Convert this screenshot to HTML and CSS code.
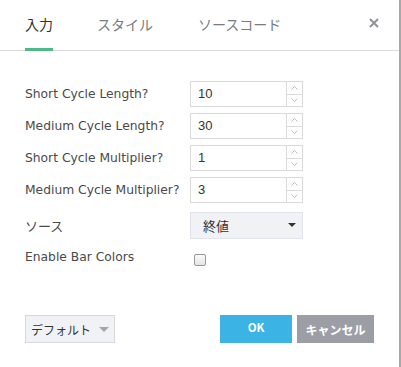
FILE: index.html
```html
<!DOCTYPE html>
<html>
<head>
<meta charset="UTF-8">
<title>入力</title>
<link rel="stylesheet" href="styles.css">
</head>
<body>
<div class="dialog">
    <div class="tabs">
        <span class="tab active">入力</span>
        <span class="tab">スタイル</span>
        <span class="tab">ソースコード</span>
        <svg class="close" width="10" height="10" viewBox="0 0 10 10"><path d="M1 1L9 9M9 1L1 9" stroke="#8f9196" stroke-width="2"/></svg>
    </div>

    <div class="content">
        <div class="row">
            <label>Short Cycle Length?</label>
            <div class="spin"><span class="val">10</span><span class="arrows"><i><svg width="7" height="4" viewBox="0 0 7 4"><path d="M0.5 3.5L3.5 0.5L6.5 3.5" fill="none" stroke="#b8c2cc"/></svg></i><i><svg width="7" height="4" viewBox="0 0 7 4"><path d="M0.5 0.5L3.5 3.5L6.5 0.5" fill="none" stroke="#b8c2cc"/></svg></i></span></div>
        </div>
        <div class="row">
            <label>Medium Cycle Length?</label>
            <div class="spin"><span class="val">30</span><span class="arrows"><i><svg width="7" height="4" viewBox="0 0 7 4"><path d="M0.5 3.5L3.5 0.5L6.5 3.5" fill="none" stroke="#b8c2cc"/></svg></i><i><svg width="7" height="4" viewBox="0 0 7 4"><path d="M0.5 0.5L3.5 3.5L6.5 0.5" fill="none" stroke="#b8c2cc"/></svg></i></span></div>
        </div>
        <div class="row">
            <label>Short Cycle Multiplier?</label>
            <div class="spin"><span class="val">1</span><span class="arrows"><i><svg width="7" height="4" viewBox="0 0 7 4"><path d="M0.5 3.5L3.5 0.5L6.5 3.5" fill="none" stroke="#b8c2cc"/></svg></i><i><svg width="7" height="4" viewBox="0 0 7 4"><path d="M0.5 0.5L3.5 3.5L6.5 0.5" fill="none" stroke="#b8c2cc"/></svg></i></span></div>
        </div>
        <div class="row">
            <label>Medium Cycle Multiplier?</label>
            <div class="spin"><span class="val">3</span><span class="arrows"><i><svg width="7" height="4" viewBox="0 0 7 4"><path d="M0.5 3.5L3.5 0.5L6.5 3.5" fill="none" stroke="#b8c2cc"/></svg></i><i><svg width="7" height="4" viewBox="0 0 7 4"><path d="M0.5 0.5L3.5 3.5L6.5 0.5" fill="none" stroke="#b8c2cc"/></svg></i></span></div>
        </div>
        <div class="row source">
            <label>ソース</label>
            <div class="select"><span>終値</span><span class="caret"></span></div>
        </div>
        <div class="row">
            <label>Enable Bar Colors</label>
            <span class="check"></span>
        </div>
    </div>

    <div class="footer">
        <div class="defaults">デフォルト<span class="caret light"></span></div>
        <div class="buttons">
            <div class="btn ok">OK</div>
            <div class="btn cancel">キャンセル</div>
        </div>
    </div>
</div>
</body>
</html>
```

FILE: styles.css
```css
body
{
    margin: 0;
    background: #fff;
    font-family: "DejaVu Sans", "Noto Sans CJK JP", sans-serif;
    color: #4a4a4a;
}
.dialog
{
    width: 399px;
    height: 367px;
    border-right: 2px solid #a9a9a9;
    display: flex;
    flex-direction: column;
}
.tabs
{
    display: flex;
    align-items: flex-start;
    height: 51px;
    border-bottom: 1px solid #dcdcdc;
    padding-left: 25px;
    padding-right: 20px;
    box-sizing: border-box;
}
.tab
{
    font-family: "Noto Sans CJK JP", sans-serif;
    font-size: 14px;
    color: #787b80;
    padding-top: 14px;
    height: 34px;
    margin-right: 45px;
}
.tab.active
{
    color: #333;
    border-bottom: 3px solid #4fb887;
    margin-right: 44px;
}
.close
{
    margin-left: auto;
    margin-top: 18px;
}
.content
{
    padding: 30px 0 0 25px;
    display: flex;
    flex-direction: column;
    gap: 6px;
}
.row
{
    display: flex;
    align-items: center;
    height: 26px;
}
.row label
{
    width: 165px;
    font-size: 12.3px;
}
.row.source
{
    margin-top: 3px;
}
.row.source label
{
    font-family: "Noto Sans CJK JP", sans-serif;
    font-size: 13px;
}
.spin
{
    width: 113px;
    height: 26px;
    box-sizing: border-box;
    border: 1px solid #dadada;
    display: flex;
}
.spin .val
{
    flex: 1;
    padding-left: 7px;
    font-size: 13px;
    line-height: 24px;
    color: #333;
    font-family: "Liberation Sans", sans-serif;
}
.arrows
{
    width: 15px;
    border-left: 1px solid #dadada;
    display: flex;
    flex-direction: column;
}
.arrows i
{
    flex: 1;
    display: flex;
    align-items: center;
    justify-content: center;
}
.arrows i:first-child
{
    border-bottom: 1px solid #dadada;
}
.select
{
    width: 113px;
    height: 27px;
    box-sizing: border-box;
    border: 1px solid #e0e3eb;
    background: #f1f2f6;
    display: flex;
    align-items: center;
    padding: 0 6px 0 12px;
    font-family: "Noto Sans CJK JP", sans-serif;
    font-size: 13px;
    color: #333;
}
.caret
{
    margin-left: auto;
    width: 0;
    height: 0;
    border-left: 4px solid transparent;
    border-right: 4px solid transparent;
    border-top: 4px solid #333;
}
.caret.light
{
    margin-left: 8px;
    border-left-width: 5px;
    border-right-width: 5px;
    border-top: 5px solid #a3a6ad;
}
.check
{
    margin-left: 4px;
    margin-top: 6px;
    width: 10px;
    height: 10px;
    border: 1px solid #999;
    border-radius: 2px;
    background: linear-gradient(#fafafa, #e4e4e4);
}
.footer
{
    margin-top: auto;
    margin-bottom: 24px;
    padding: 0 25px;
    display: flex;
    align-items: center;
}
.defaults
{
    width: 90px;
    height: 28px;
    box-sizing: border-box;
    border: 1px solid #d6d8dd;
    background: #f1f2f6;
    display: flex;
    align-items: center;
    justify-content: center;
    font-family: "Noto Sans CJK JP", sans-serif;
    font-size: 12px;
    color: #333;
}
.buttons
{
    margin-left: auto;
    display: flex;
    gap: 5px;
}
.btn
{
    height: 28px;
    display: flex;
    align-items: center;
    justify-content: center;
    color: #fff;
    font-weight: bold;
    font-family: "Noto Sans CJK JP", sans-serif;
}
.btn.ok
{
    width: 72px;
    background: #3bb3e4;
    font-size: 11.5px;
    padding-bottom: 4px;
    box-sizing: border-box;
}
.btn.cancel
{
    width: 77px;
    background: #9c9ea6;
    font-size: 12px;
}
```
